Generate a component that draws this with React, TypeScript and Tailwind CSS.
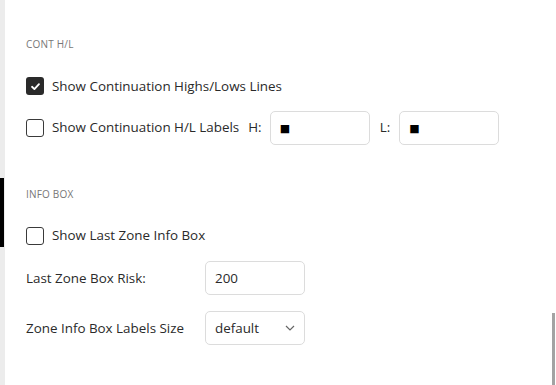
import React from "react";

function Check({ checked }: { checked?: boolean }) {
  return checked ? (
    <div className="w-[18px] h-[18px] rounded-[3px] bg-[#2a2a2a] flex items-center justify-center shrink-0">
      <svg width="11" height="11" viewBox="0 0 12 12">
        <path d="M2.2 6.3 L4.8 8.8 L9.8 3.4" fill="none" stroke="#fff" strokeWidth="2" strokeLinecap="round" strokeLinejoin="round" />
      </svg>
    </div>
  ) : (
    <div className="w-[18px] h-[18px] rounded-[3px] border-[1.5px] border-[#3a3a3a] bg-white shrink-0" />
  );
}

function Box({ children, className = "" }: { children?: React.ReactNode; className?: string }) {
  return (
    <div className={"w-[100px] h-[34px] rounded-[5px] border border-[#dcdcdc] flex items-center px-[9px] text-[13.4px] text-[#2a2a2a] bg-white " + className}>
      {children}
    </div>
  );
}

export default function App() {
  return (
    <div
      className="relative w-[556px] h-[385px] bg-white overflow-hidden text-[#2a2a2a]"
      style={{ fontFamily: '"Open Sans", "Noto Sans", sans-serif' }}
    >
      <div className="absolute left-0 top-0 w-[5px] h-full bg-[#ececec]" />
      <div className="absolute left-0 top-[178px] w-[4px] h-[69px] bg-black" />
      <div className="absolute left-[552px] top-[313px] w-[3px] h-[72px] bg-[#a3a3a3]" />

      <div className="pl-[26px] pt-[37px] flex flex-col">
        <div className="text-[10px] leading-[14px] text-[#777] tracking-[0.2px]">CONT H/L</div>
        <div className="mt-[26px] flex items-center h-[18px]">
          <Check checked />
          <span className="ml-[8px] text-[13.4px] leading-[18px] -mt-[1px]">Show Continuation Highs/Lows Lines</span>
        </div>
        <div className="mt-[16px] flex items-center h-[34px]">
          <Check />
          <span className="ml-[8px] text-[13.4px] -mt-[1px]">Show Continuation H/L Labels</span>
          <span className="ml-[9px] text-[13.4px] -mt-[1px]">H:</span>
          <Box className="ml-[8px]">
            <span className="text-[11px] leading-none text-black" style={{ fontFamily: '"DejaVu Sans", sans-serif' }}>■</span>
          </Box>
          <span className="ml-[10px] text-[13.4px] -mt-[1px]">L:</span>
          <Box className="ml-[9px]">
            <span className="text-[11px] leading-none text-black" style={{ fontFamily: '"DejaVu Sans", sans-serif' }}>■</span>
          </Box>
        </div>

        <div className="mt-[42px] text-[10px] leading-[14px] text-[#777] tracking-[0.2px]">INFO BOX</div>
        <div className="mt-[26px] flex items-center h-[18px]">
          <Check />
          <span className="ml-[8px] text-[13.4px] -mt-[1px]">Show Last Zone Info Box</span>
        </div>
        <div className="mt-[16px] flex items-center h-[34px]">
          <span className="w-[179px] text-[13.4px]">Last Zone Box Risk:</span>
          <Box>200</Box>
        </div>
        <div className="mt-[16px] flex items-center h-[34px]">
          <span className="w-[179px] text-[13.4px]">Zone Info Box Labels Size</span>
          <Box className="justify-between">
            <span>default</span>
            <svg width="10" height="6" viewBox="0 0 10 6">
              <path d="M1 1 L5 5 L9 1" fill="none" stroke="#666" strokeWidth="1.2" />
            </svg>
          </Box>
        </div>
      </div>
    </div>
  );
}
